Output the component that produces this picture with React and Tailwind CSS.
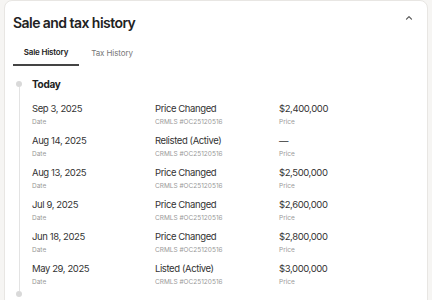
import React from "react";

const rows = [
  { date: "Sep 3, 2025", event: "Price Changed", price: "$2,400,000" },
  { date: "Aug 14, 2025", event: "Relisted (Active)", price: "—" },
  { date: "Aug 13, 2025", event: "Price Changed", price: "$2,500,000" },
  { date: "Jul 9, 2025", event: "Price Changed", price: "$2,600,000" },
  { date: "Jun 18, 2025", event: "Price Changed", price: "$2,800,000" },
  { date: "May 29, 2025", event: "Listed (Active)", price: "$3,000,000" },
];

export default function App() {
  return (
    <div className="w-[432px] h-[300px] overflow-hidden bg-[#f6f5f3] pl-[4px] pr-[4px]" style={{ fontFamily: "Inter, sans-serif" }}>
      <div className="bg-white border border-[#e8e6e3] rounded-[8px] h-[320px] px-[8px]">
        <div className="flex items-center justify-between h-[38px] pt-[5px]">
          <h2 className="text-[14px] font-semibold text-[#222] tracking-[-0.55px]">Sale and tax history</h2>
          <svg width="10" height="10" viewBox="0 0 10 10" className="mr-[5px] mb-[10px]">
            <path d="M2.5 6.2 L5 3.7 L7.5 6.2" fill="none" stroke="#555" strokeWidth="1.2" strokeLinecap="round" strokeLinejoin="round" />
          </svg>
        </div>
        <div className="flex h-[27px] items-stretch">
          <div className="w-[66px] flex items-center justify-center border-b-2 border-[#444] text-[8px] font-semibold text-[#222] tracking-[-0.2px]">Sale History</div>
          <div className="w-[66px] flex items-center justify-center text-[8px] text-[#777] tracking-[-0.1px]">Tax History</div>
        </div>
        <div className="flex mt-[12px]">
          <div className="w-[12px] flex flex-col items-center">
            <div className="w-[6px] h-[6px] rounded-full bg-[#d9d9d9] mt-[3px]"></div>
            <div className="w-px bg-[#e3e3e3] h-[204px]"></div>
            <div className="w-[6px] h-[6px] rounded-full bg-[#d9d9d9]"></div>
          </div>
          <div className="flex-1 ml-[7px]">
            <div className="text-[10px] font-bold text-[#222] h-[12px] leading-[12px] tracking-[-0.3px]">Today</div>
            <div className="mt-[12px]">
              {rows.map((r, i) => (
                <div key={i} className="grid grid-cols-[123px_124px_1fr] h-[32px]">
                  <div>
                    <div className="text-[9.5px] text-[#333] leading-[14px] tracking-[-0.4px]">{r.date}</div>
                    <div className="text-[6.5px] text-[#999] leading-[10px] mt-[1px]">Date</div>
                  </div>
                  <div>
                    <div className="text-[9.5px] text-[#333] leading-[14px] tracking-[-0.4px]">{r.event}</div>
                    <div className="text-[6.5px] text-[#999] leading-[10px] mt-[1px]">CRMLS #OC25120516</div>
                  </div>
                  <div>
                    <div className="text-[9.5px] text-[#333] leading-[14px] tracking-[-0.4px]">{r.price}</div>
                    <div className="text-[6.5px] text-[#999] leading-[10px] mt-[1px]">Price</div>
                  </div>
                </div>
              ))}
            </div>
          </div>
        </div>
      </div>
    </div>
  );
}
